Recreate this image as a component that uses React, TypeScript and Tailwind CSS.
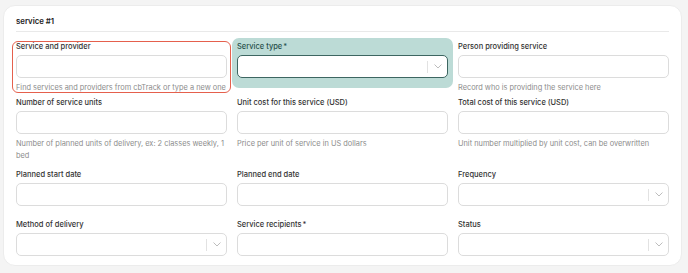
import React from "react";

const font = { fontFamily: "Inter, 'Noto Sans', sans-serif" };

function Chevron() {
  return (
    <div className="absolute right-0 top-0 bottom-0 flex items-center">
      <div className="w-px h-[12px] bg-[#e2e2e2]" />
      <div className="w-[19px] flex items-center justify-center">
        <svg width="8" height="5" viewBox="0 0 8 5" fill="none">
          <path d="M0.8 0.8 L4 4 L7.2 0.8" stroke="#b5b5b5" strokeWidth="0.9" strokeLinecap="round" strokeLinejoin="round" />
        </svg>
      </div>
    </div>
  );
}

function Field({
  label,
  required,
  helper,
  select,
  variant,
}: {
  label: string;
  required?: boolean;
  helper?: React.ReactNode;
  select?: boolean;
  variant?: "red" | "teal";
}) {
  const teal = variant === "teal";
  return (
    <div className="relative flex flex-col">
      {teal && (
        <div className="absolute -left-[5px] -right-[5px] -top-[3px] h-[50px] rounded-[7px] bg-[#bcdbd6]" />
      )}
      {variant === "red" && (
        <div className="absolute -left-[4px] -right-[4px] top-0 h-[52px] rounded-[6px] border-[1.5px] border-[#e5604d] pointer-events-none z-10" />
      )}
      <div
        className={`relative h-[12px] leading-[12px] text-[7.5px] font-medium ${teal ? "text-[#28524d]" : "text-[#333333]"}`}
      >
        {label}
        {required && <span className="ml-[1px]">*</span>}
      </div>
      <div
        className={`relative mt-[2px] h-[23px] rounded-[5px] bg-white ${
          teal ? "border-[1.5px] border-[#3d6661]" : "border border-[#dcdcdc]"
        }`}
      >
        {select && <Chevron />}
      </div>
      {helper && (
        <div className="relative mt-[4px] leading-[12px] text-[7.4px] text-[#8c8c8c]">{helper}</div>
      )}
    </div>
  );
}

export default function App() {
  return (
    <div className="w-[688px] h-[273px] bg-[#f4f4f4] pt-[5px] pl-[3px]" style={font}>
      <div className="w-[679px] h-[261px] bg-white rounded-[12px] border border-[#ececec] px-[12px]">
        <div className="pt-[9px] h-[21px] leading-[12px] text-[7.8px] font-semibold text-[#222]">service #1</div>
        <div className="mt-[4px] h-px bg-[#e9e9e9]" />
        <div className="mt-[9px] grid grid-cols-3 gap-x-[10px]">
          <Field label="Service and provider" variant="red" helper="Find services and providers from cbTrack or type a new one" />
          <Field label="Service type" required select variant="teal" />
          <Field label="Person providing service" helper="Record who is providing the service here" />
        </div>
        <div className="mt-[3px] grid grid-cols-3 gap-x-[10px]">
          <Field
            label="Number of service units"
            helper="Number of planned units of delivery, ex: 2 classes weekly, 1 bed"
          />
          <Field label="Unit cost for this service (USD)" helper="Price per unit of service in US dollars" />
          <Field
            label="Total cost of this service (USD)"
            helper="Unit number multiplied by unit cost, can be overwritten"
          />
        </div>
        <div className="mt-[7px] grid grid-cols-3 gap-x-[10px]">
          <Field label="Planned start date" />
          <Field label="Planned end date" />
          <Field label="Frequency" select />
        </div>
        <div className="mt-[13px] grid grid-cols-3 gap-x-[10px]">
          <Field label="Method of delivery" select />
          <Field label="Service recipients" required />
          <Field label="Status" select />
        </div>
      </div>
    </div>
  );
}
